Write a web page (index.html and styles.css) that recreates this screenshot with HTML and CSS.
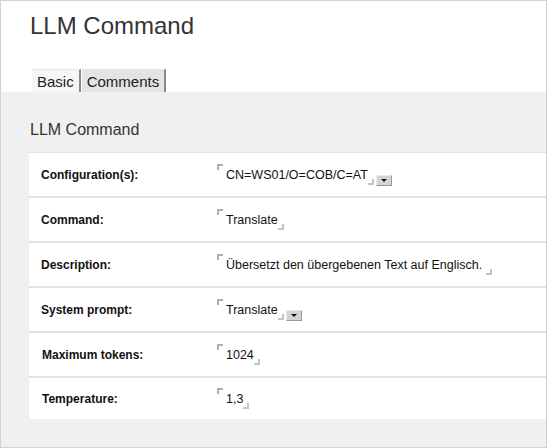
FILE: index.html
```html
<!DOCTYPE html>
<html>
<head>
<meta charset="utf-8">
<link rel="stylesheet" href="styles.css">
</head>
<body>
<div class="frame">
  <div class="header">
    <h1 class="title">LLM Command</h1>
    <div class="tabs">
      <div class="tab active">Basic</div>
      <div class="tab">Comments</div>
    </div>
  </div>
  <div class="panel">
    <h2 class="subtitle">LLM Command</h2>
    <div class="table">
      <div class="row">
        <div class="label">Configuration(s):</div>
        <div class="value"><span class="open"></span>CN=WS01/O=COB/C=AT<span class="close"></span><span class="drop"><span class="arrow"></span></span></div>
      </div>
      <div class="row">
        <div class="label">Command:</div>
        <div class="value"><span class="open"></span>Translate<span class="close"></span></div>
      </div>
      <div class="row">
        <div class="label">Description:</div>
        <div class="value"><span class="open"></span>Übersetzt den übergebenen Text auf Englisch.&nbsp;<span class="close"></span></div>
      </div>
      <div class="row">
        <div class="label">System prompt:</div>
        <div class="value"><span class="open"></span>Translate<span class="close"></span><span class="drop"><span class="arrow"></span></span></div>
      </div>
      <div class="row">
        <div class="label shift">Maximum tokens:</div>
        <div class="value"><span class="open"></span>1024<span class="close"></span></div>
      </div>
      <div class="row">
        <div class="label shift">Temperature:</div>
        <div class="value"><span class="open"></span>1,3<span class="close"></span></div>
      </div>
    </div>
  </div>
</div>
</body>
</html>
```
FILE: styles.css
```css
html, body {
  margin: 0;
  padding: 0;
  background: #ffffff;
}
body {
  font-family: "Liberation Sans", Arial, sans-serif;
  color: #222;
}
.frame {
  width: 547px;
  height: 448px;
  box-sizing: border-box;
  border: 1px solid #d2d2d2;
  display: flex;
  flex-direction: column;
  overflow: hidden;
}
.header {
  height: 91px;
  background: #fff;
  display: flex;
  flex-direction: column;
  justify-content: space-between;
  flex: none;
}
.title {
  margin: 0;
  padding: 11px 0 0 29px;
  font-size: 24px;
  font-weight: normal;
  color: #333;
  line-height: 28px;
}
.tabs {
  display: flex;
  padding-left: 31px;
  align-items: flex-end;
}
.tab {
  font-size: 15px;
  line-height: 22px;
  height: 21px;
  padding: 1px 5px 0;
  color: #222;
  background: #e4e4e4;
  border-right: 2px solid #8a8a8a;
  border-top: 1px solid #e6e6e6;
}
.tab.active {
  background: #f6f6f6;
  margin-right: 1px;
}
.panel {
  flex: 1;
  background: #f0f0f0;
  padding: 0 0 0 28px;
  display: flex;
  flex-direction: column;
}
.subtitle {
  margin: 0;
  padding: 28px 0 0 1px;
  font-size: 16px;
  font-weight: normal;
  color: #333;
  line-height: 20px;
  box-sizing: content-box;
  height: 32px;
}
.table {
  background: #fff;
  border-top: 1px solid #e2e2e2;
}
.row {
  display: flex;
  align-items: center;
  height: 43px;
  border-bottom: 2px solid #e2e2e2;
}
.row:last-child {
  border-bottom: none;
  height: 41px;
}
.label {
  width: 176px;
  padding-left: 12px;
  font-size: 12px;
  font-weight: bold;
  color: #111;
  flex: none;
}
.label.shift {
  padding-left: 13px;
  width: 175px;
}
.value {
  font-size: 12.5px;
  color: #111;
  display: flex;
  align-items: center;
}
.open {
  display: inline-block;
  box-sizing: border-box;
  width: 6px;
  height: 6px;
  border-left: 2px solid #b0b0b0;
  border-top: 2px solid #b0b0b0;
  margin-right: 3px;
  align-self: flex-start;
  margin-top: -4px;
}
.close {
  display: inline-block;
  width: 6px;
  height: 6px;
  box-sizing: border-box;
  border-right: 2px solid #c4c4c4;
  border-bottom: 2px solid #c4c4c4;
  margin-left: 0;
  align-self: flex-end;
  margin-bottom: -3px;
}
.drop {
  display: inline-flex;
  width: 14px;
  height: 9px;
  background: #d4d4d4;
  border: 1px solid #ececec;
  border-right-color: #9a9a9a;
  border-bottom-color: #9a9a9a;
  margin-left: 2px;
  align-items: center;
  justify-content: center;
  align-self: flex-end;
  margin-bottom: -4px;
}
.arrow {
  width: 0;
  height: 0;
  border-left: 3px solid transparent;
  border-right: 3px solid transparent;
  border-top: 3px solid #111;
}
```
